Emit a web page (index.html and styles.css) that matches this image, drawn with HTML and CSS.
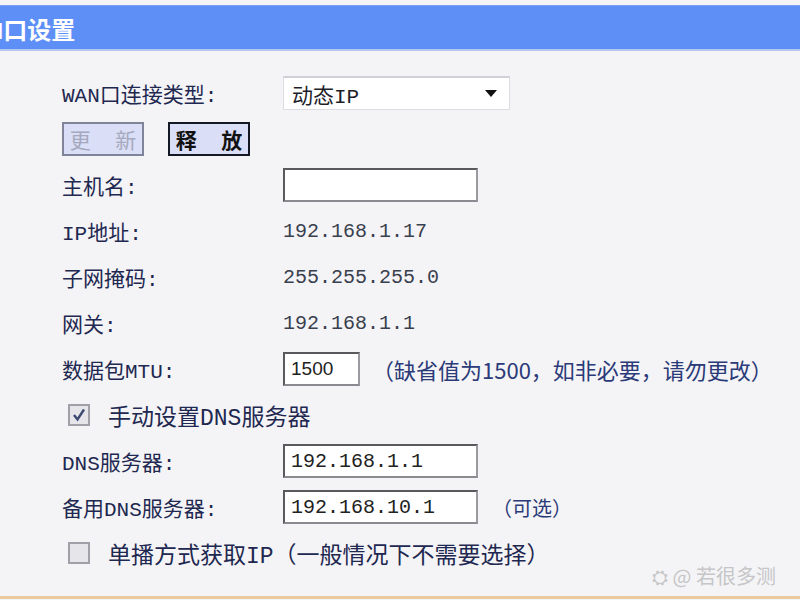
FILE: index.html
```html
<!DOCTYPE html>
<html lang="zh-CN">
<head>
<meta charset="utf-8">
<title>WAN口设置</title>
<link rel="stylesheet" href="styles.css">
</head>
<body>
<div class="page">
  <div class="header"><span class="title">WAN口设置</span></div>
  <div class="form">
    <div class="row">
      <span class="label">WAN口连接类型:</span>
      <div class="select"><span>动态IP</span><span class="arrow"></span></div>
    </div>
    <div class="row buttons">
      <span class="btn disabled">更 新</span>
      <span class="btn active">释 放</span>
    </div>
    <div class="row">
      <span class="label">主机名:</span>
      <span class="input wide"></span>
    </div>
    <div class="row">
      <span class="label">IP地址:</span>
      <span class="value">192.168.1.17</span>
    </div>
    <div class="row">
      <span class="label">子网掩码:</span>
      <span class="value">255.255.255.0</span>
    </div>
    <div class="row">
      <span class="label">网关:</span>
      <span class="value">192.168.1.1</span>
    </div>
    <div class="row">
      <span class="label">数据包MTU:</span>
      <span class="input short sans">1500</span>
      <span class="note">（缺省值为1500，如非必要，请勿更改）</span>
    </div>
    <div class="row check-row">
      <span class="checkbox checked"><svg viewBox="0 0 22 22" width="22" height="22"><path d="M6 11 L9.5 15.5 L16 5.5" fill="none" stroke="#3d4a72" stroke-width="2.4"/></svg></span>
      <span class="check-label">手动设置DNS服务器</span>
    </div>
    <div class="row">
      <span class="label">DNS服务器:</span>
      <span class="input wide">192.168.1.1</span>
    </div>
    <div class="row">
      <span class="label">备用DNS服务器:</span>
      <span class="input wide">192.168.10.1</span>
      <span class="note opt">（可选）</span>
    </div>
    <div class="row check-row">
      <span class="checkbox"></span>
      <span class="check-label">单播方式获取IP（一般情况下不需要选择）</span>
    </div>
  </div>
  <div class="bottom-line"></div>
  <div class="watermark">⛭ @ 若很多测</div>
</div>
</body>
</html>
```
FILE: styles.css
```css
html, body {
  margin: 0;
  padding: 0;
}
body {
  background: #f4f4f6;
  font-family: "Liberation Mono", "Noto Sans CJK SC", monospace;
  color: #1e2850;
  overflow: hidden;
}
.page {
  position: relative;
  width: 800px;
  height: 600px;
  background: #f4f4f6;
}
.header {
  margin-top: 5px;
  height: 43px;
  background: #5d8ff6;
  border-top: 1px solid #7aa2f0;
  border-bottom: 2px solid #b3c9f2;
  display: flex;
  align-items: center;
  overflow: hidden;
}
.title {
  margin-left: -40px;
  color: #ffffff;
  font-size: 24px;
  font-weight: bold;
  font-family: "Liberation Mono", "Noto Sans CJK SC", monospace;
  white-space: nowrap;
  padding-top: 2px;
}
.form {
  padding: 19px 0 0 62px;
}
.row {
  height: 46px;
  display: flex;
  align-items: center;
  font-size: 21px;
  white-space: nowrap;
}
.label {
  width: 221px;
  flex: none;
  color: #1e2850;
}
.value {
  color: #3a3f4e;
  font-size: 20px;
}
.select {
  height: 34px;
  background: #ffffff;
  border: 1px solid #dcdce2;
  border-top: 2px solid #d0d0d8;
  display: flex;
  align-items: center;
  justify-content: space-between;
  padding: 0 12px 0 8px;
  box-sizing: border-box;
  width: 227px;
  color: #1e1e2a;
}
.arrow {
  width: 0;
  height: 0;
  border-left: 6px solid transparent;
  border-right: 6px solid transparent;
  border-top: 7px solid #111;
}
.buttons {
  gap: 24px;
}
.btn {
  width: 82px;
  height: 34px;
  box-sizing: border-box;
  display: flex;
  align-items: center;
  justify-content: center;
  background: #dadef6;
  font-size: 21px;
  letter-spacing: 6px;
  padding-left: 6px;
}
.btn.disabled {
  border: 2px solid #7f8498;
  color: #a5a9bd;
}
.btn.active {
  border: 2px solid #141824;
  color: #111;
  font-weight: bold;
}
.input {
  height: 34px;
  box-sizing: border-box;
  background: #ffffff;
  border: 2px solid #5a5a5e;
  border-right-color: #9a9aa0;
  border-bottom-color: #8a8a90;
  display: flex;
  align-items: center;
  padding-left: 6px;
  color: #222;
  font-size: 20px;
}
.input.wide {
  width: 195px;
}
.input.short {
  width: 77px;
}
.sans {
  font-family: "Liberation Sans", "Noto Sans CJK SC", sans-serif;
  font-size: 19px;
}
.note {
  margin-left: 12px;
  color: #2b3a78;
  font-family: "Noto Sans CJK SC", sans-serif;
  font-size: 22px;
}
.note.opt {
  margin-left: 14px;
  font-size: 20px;
}
.check-row {
  padding-left: 6px;
}
.checkbox {
  width: 22px;
  height: 22px;
  box-sizing: border-box;
  border: 2px solid #a0a0a8;
  background: #e6e6ea;
  display: flex;
  align-items: center;
  justify-content: center;
  flex: none;
}
.checkbox svg {
  display: block;
  margin: -2px;
}
.check-label {
  margin-left: 18px;
  color: #1e2850;
  font-size: 23px;
}
.bottom-line {
  position: absolute;
  left: 0;
  right: 0;
  top: 591px;
  height: 3px;
  background: #ebc99e;
}
.watermark {
  position: absolute;
  left: 652px;
  top: 556px;
  font-family: "Noto Sans CJK SC", sans-serif;
  font-size: 20px;
  color: #c6c6c8;
  white-space: nowrap;
}
```
